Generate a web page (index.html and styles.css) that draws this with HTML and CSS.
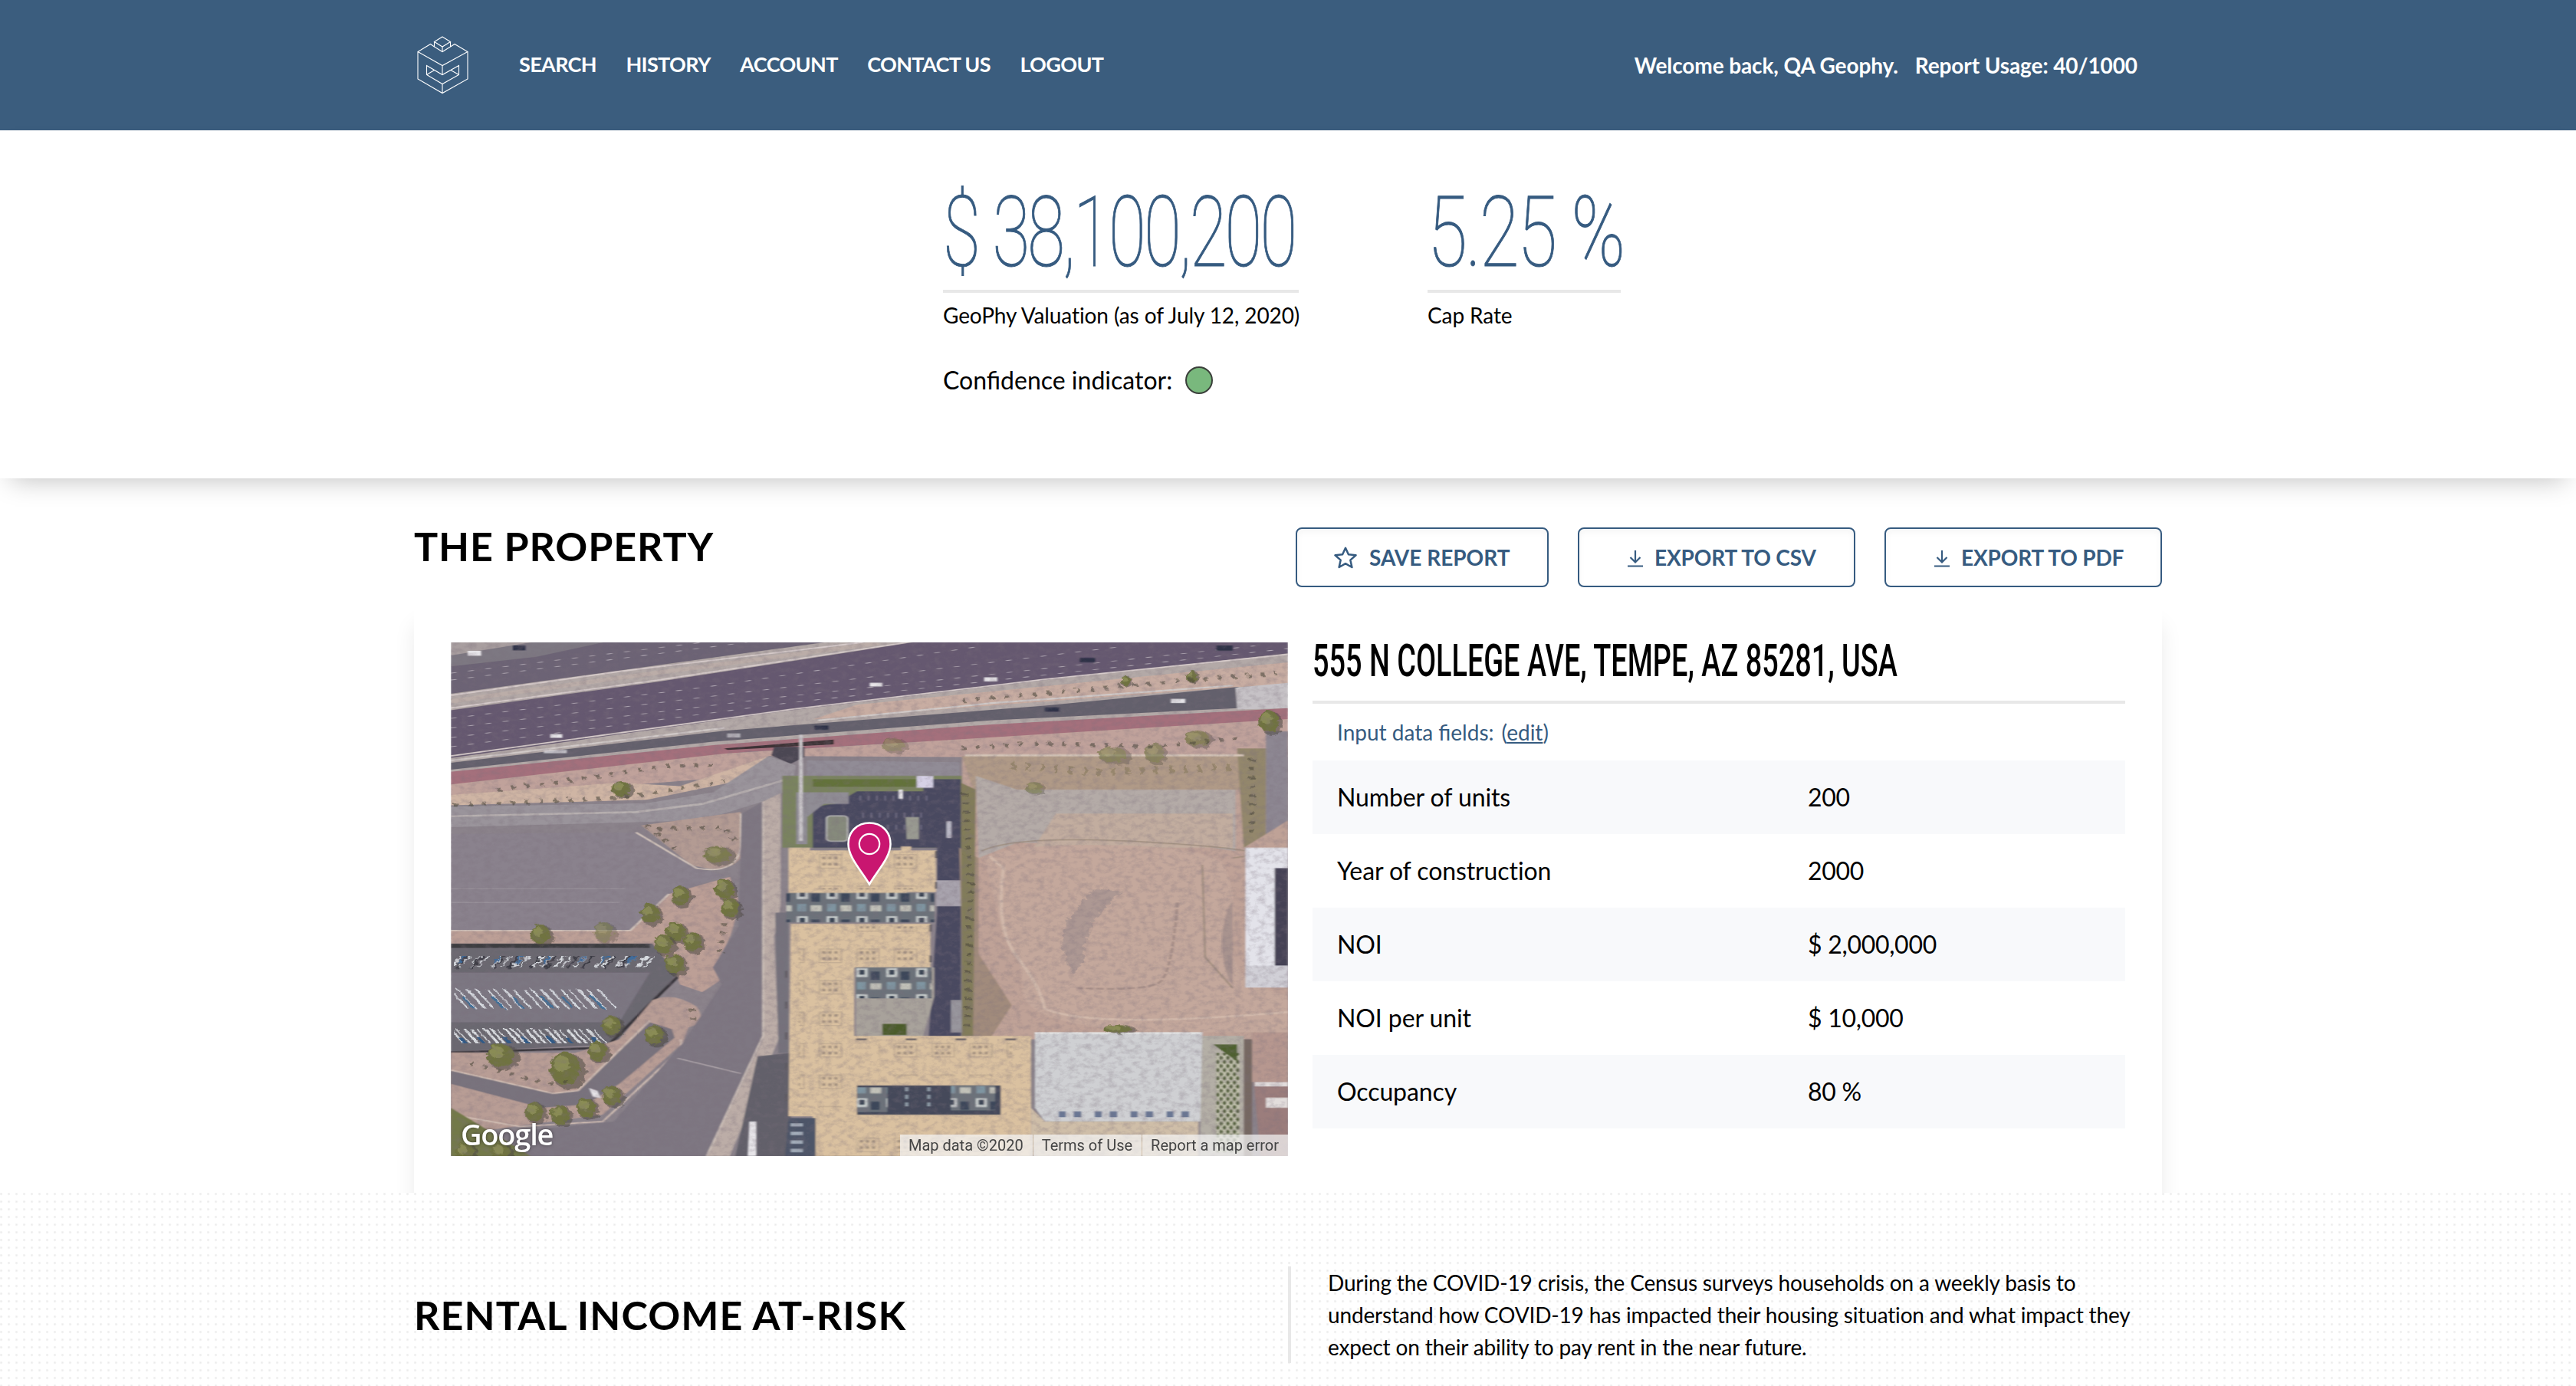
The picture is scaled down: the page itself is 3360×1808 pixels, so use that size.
FILE: index.html
```html
<!DOCTYPE html>
<html lang="en">
<head>
<meta charset="utf-8">
<title>GeoPhy Valuation</title>
<link rel="stylesheet" href="styles.css">
</head>
<body>
<header class="topbar">
  <div class="container topbar-inner">
    <svg class="logo" viewBox="0 0 67 76" fill="none" stroke="#fff" stroke-width="1.1">
      <path d="M33 1 43.500 7.500 33 14 22.500 7.500zM22.500 7.500V14L33 20.500 43.500 14V7.500M33 14V20.500"/>
      <path d="M22.500 14 17.500 10.500 1 20.500 33 38.500 66 20.500 49 10.500 43.500 14M1 20.500V56L33 74.500 66 56V20.500M33 38.500V50.500M33 62.500V74.500"/>
      <path d="M12.500 38.500V50.500L33 62.500 54.500 50.500V38.500L33 50.500zM12.500 50.500 22.500 44.500M54.500 50.500 44 44.500"/>
    </svg>
    <nav class="nav">
      <a>SEARCH</a><a>HISTORY</a><a>ACCOUNT</a><a>CONTACT US</a><a>LOGOUT</a>
    </nav>
    <div class="usage"><span>Welcome back, QA Geophy.</span><span>Report Usage: 40/1000</span></div>
  </div>
</header>

<section class="hero">
  <div class="metric metric-value">
    <div class="figure"><span>$ 38,100,200</span></div>
    <div class="label">GeoPhy Valuation (as of July 12, 2020)</div>
    <div class="confidence">Confidence indicator: <i class="dot"></i></div>
  </div>
  <div class="metric metric-rate">
    <div class="figure"><span>5.25 %</span></div>
    <div class="label">Cap Rate</div>
  </div>
</section>

<main class="property">
  <div class="container">
    <div class="section-head">
      <h2>THE PROPERTY</h2>
      <div class="actions">
        <button class="btn">
          <svg class="star" viewBox="0 0 30 29" fill="none" stroke="currentColor" stroke-width="2.500" stroke-linejoin="round"><path d="M15 1.800 18.900 10.300 28.500 11.300 21.300 17.600 23.400 27 15 22.200 6.600 27 8.700 17.600 1.500 11.300 11.100 10.300z"/></svg>
          SAVE REPORT
        </button>
        <button class="btn btn-export">
          <svg class="down" viewBox="0 0 20 22" fill="none" stroke="currentColor" stroke-width="2.200"><path d="M10 0V15M3.500 9 10 15.500 16.500 9M0 20.500H20"/></svg>
          EXPORT TO CSV
        </button>
        <button class="btn btn-export">
          <svg class="down" viewBox="0 0 20 22" fill="none" stroke="currentColor" stroke-width="2.200"><path d="M10 0V15M3.500 9 10 15.500 16.500 9M0 20.500H20"/></svg>
          EXPORT TO PDF
        </button>
      </div>
    </div>

    <div class="card">
      <div class="map">
        <svg class="aerial" viewBox="25 40 1515 1501" preserveAspectRatio="none">
          <defs>
            <filter id="grain" x="0" y="0" width="100%" height="100%">
              <feTurbulence type="fractalNoise" baseFrequency="0.070" numOctaves="4" seed="4"/>
              <feColorMatrix values="0 0 0 0 .2  0 0 0 0 .16  0 0 0 0 .2  1.500 0 0 0 -.620"/>
            </filter>
            <filter id="soft"><feGaussianBlur stdDeviation="1.200"/></filter>
            <filter id="rough" x="0" y="0" width="100%" height="100%">
              <feTurbulence type="fractalNoise" baseFrequency="0.090" numOctaves="2" seed="9"/>
              <feDisplacementMap in="SourceGraphic" scale="14"/>
              <feGaussianBlur stdDeviation="1.100"/>
            </filter>
            <pattern id="units" width="68" height="92" patternUnits="userSpaceOnUse">
              <rect x="12" y="16" width="40" height="40" fill="none" stroke="#ad9a88" stroke-width="1.500"/>
              <path d="M17 26H48M17 44H48" stroke="#a3917f" stroke-width="7" stroke-dasharray="6 5"/>
            </pattern>
            <pattern id="balcony" width="54" height="76" patternUnits="userSpaceOnUse">
              <rect width="54" height="76" fill="#6c727a"/>
              <rect x="3" y="4" width="20" height="26" fill="#cbd0cf"/><rect x="8" y="9" width="10" height="14" fill="#3a4554"/>
              <rect x="29" y="14" width="16" height="24" fill="#3c475a"/><rect x="4" y="44" width="16" height="22" fill="#7f95a1"/>
              <rect x="28" y="48" width="20" height="18" fill="#c2c2b9"/>
            </pattern>
            <pattern id="lattice" width="12" height="24" patternUnits="userSpaceOnUse">
              <rect width="12" height="24" fill="#c4c3b0"/><path d="M3 0 6 6 3 12 0 6zM9 12 12 18 9 24 6 18z" fill="#4d5a34" stroke="#4d5a34" stroke-width="1.500"/>
            </pattern>
            <g id="tree"><ellipse cx="5" cy="6" rx="19" ry="31" fill="#4a4740" opacity=".55"/><ellipse rx="17" ry="28" fill="#6f7340"/><ellipse cx="-4" cy="-8" rx="9" ry="14" fill="#8a8c55"/></g>
          </defs>
          <g filter="url(#soft)">
          <rect x="25" y="40" width="1515" height="1501" fill="#8b838b"/>
          <!-- freeway -->
          <path d="M25 40H1540V240L720 320 25 420z" fill="#b3a9a7"/>
          <path d="M25 90 300 40H700L25 190z" fill="#6c6474"/>
          <path d="M25 110 180 82 300 40H25z" fill="#7d7882"/>
          <path d="M25 40H170L25 78z" fill="#a89e9f"/>
          <path d="M25 238 400 155 860 40H1540V72L1100 150 640 238 25 378z" fill="#65596f"/>
          <g fill="none" stroke="#b5acb8" stroke-width="2" stroke-dasharray="10 22">
            <path d="M25 262 480 172 980 52M25 290 560 185 1240 52M25 318 620 200 1480 50M25 345 640 216 1540 58M25 150 560 40M25 130 480 40"/>
          </g>
          <path d="M25 195 330 125 770 40M25 232 400 150 850 40M25 372 640 236 1100 148 1540 75" fill="none" stroke="#d6cbca" stroke-width="4"/>
          <path d="M25 212 360 137 800 42" fill="none" stroke="#bbada8" stroke-width="12"/>
          <path d="M680 265 760 222 1000 184 1540 98V160L1000 225z" fill="#c8ada2"/>
          <path d="M25 392 520 298 1100 225 1450 170V232L1000 268 500 330 25 412z" fill="#63606c"/>
          <path d="M1445 172 1540 158V232L1448 236z" fill="#c6c2c6"/>
          <path d="M690 268 1000 218 1440 166M25 385 520 290" stroke="#d0c9c7" stroke-width="5" fill="none"/>
          <path d="M25 418 500 340 1000 280 1540 232V268L1000 320 560 360 25 462z" fill="#a4707c"/>
          <path d="M25 455 520 365 720 345 1000 318 1540 264V375H950L600 372 480 440 25 500z" fill="#c0a29b"/>
          <path d="M25 486 330 450 440 460 600 372 560 440 380 500 25 516z" fill="#cfb5a4"/>
          <path d="M520 350 718 324V338L525 354z" fill="#3c3036"/><path d="M610 345H665V375L640 395 605 370z" fill="#4c4753"/>
          <!-- ramp road -->
          <path d="M25 520 380 510 500 478 600 372 650 400 640 470 590 505 480 560 25 580z" fill="#9a949b"/>
          <path d="M25 548 360 536 480 512 570 470 650 432" stroke="#b7b0b0" stroke-width="6" fill="none"/>
          <path d="M670 385 945 390V445H668z" fill="#918c96"/>
          <path d="M370 575 550 535 550 670Q525 720 460 690z" fill="#b39b93"/>
          <!-- west lots -->
          <path d="M25 600 360 595 470 700 520 720 420 780 350 880 25 882z" fill="#8a828d"/>
          <path d="M25 760H340M25 800H330" stroke="#979099" stroke-width="3"/>
          <path d="M25 882H350L420 775 530 725 545 790Q540 900 500 990L515 1025 480 1062 440 1040 430 1000 25 925z" fill="#bc9f96"/>
          <path d="M25 882H350L420 775M360 595 470 700Q540 720 550 640V540" stroke="#cec0b8" stroke-width="4" fill="none"/>
          <path d="M25 920H390L435 1010 320 1215 25 1235z" fill="#6b6770"/>
          <path d="M25 1005H385L330 1150H25z" fill="#7c7782"/>
          <path d="M25 927H385" stroke="#3d3c40" stroke-width="12"/>
          </g>
          <g filter="url(#rough)">
          <g transform="translate(0 962) skewX(-30)"><path d="M38 0H392" stroke="#d9dde2" stroke-width="54" stroke-dasharray="5 11 3 17 6 8 4 21"/><path d="M45 -5H388" stroke="#3c6a9b" stroke-width="40" stroke-dasharray="6 59 4 35 5 44"/><path d="M50 10H380" stroke="#3b3b44" stroke-width="40" stroke-dasharray="4 22 6 35"/></g>
          <g transform="translate(0 1082) skewX(30)"><path d="M38 0H315" stroke="#d5d9df" stroke-width="56" stroke-dasharray="4 10 3 13 6 11 4 16"/><path d="M48 10H310" stroke="#426f97" stroke-width="34" stroke-dasharray="5 48 6 31"/></g>
          <g transform="translate(0 1198) skewX(30)"><path d="M38 0H300" stroke="#dadde1" stroke-width="58" stroke-dasharray="5 7 3 10 6 6"/><path d="M40 12H296" stroke="#315a86" stroke-width="34" stroke-dasharray="8 26 6 40"/></g>
          </g>
          <g filter="url(#soft)">
          <path d="M435 1018 305 1225 25 1238" fill="none" stroke="#37343a" stroke-width="6"/>
          <path d="M25 1238 250 1240 330 1200 390 1085Q430 1060 470 1105 490 1150 455 1165L445 1210 300 1420 25 1480z" fill="#b89d95"/>
          <path d="M25 1290 210 1358 255 1350 385 1150 425 1170 430 1195 330 1330 270 1390 190 1400 25 1330z" fill="#79737d"/>
          <path d="M440 1200Q450 1220 420 1260L300 1440 150 1455 25 1420M25 1290 210 1358 255 1350 385 1145" fill="none" stroke="#d0bdb3" stroke-width="4"/>
          <path d="M25 1400 170 1541H25z" fill="#73794a"/>
          <!-- college avenue -->
          <path d="M552 540 590 505 600 1200 490 1541H170L110 1475 320 1440 445 1210 515 1040 500 990 545 870z" fill="#7e7782"/>
          <path d="M590 505 622 480V810L610 900 618 1200 530 1541H488L590 1200z" fill="#bcada7"/>
          <path d="M590 505V1190L488 1541M618 830V1200" fill="none" stroke="#d2c5bd" stroke-width="3"/>
          <path d="M435 1255 550 1300" stroke="#b2a9ad" stroke-width="3"/>
          <path d="M580 1250 640 1240V1541H540z" fill="#62616a"/>
          <path d="M612 830H636V1240H618z" fill="#75727b"/>
          <!-- parking court -->
          <path d="M625 430H950V640H625z" fill="#7a835f"/>
          <path d="M680 640V540Q682 515 720 512L760 475H880V440H948V1200L890 1190 905 830V640z" fill="#4a4860"/>
          <path d="M665 478H745V512H700L670 550V630H650V478z" fill="#908d95"/><rect x="655" y="310" width="7" height="310" fill="#cbc7ca"/>
          <path d="M680 440H870V462H680z" fill="#63723a"/><path d="M868 430H898V465H868z" fill="#d6d1e6"/>
          <rect x="705" y="547" width="38" height="74" rx="8" fill="#868a7c" stroke="#b9b9b8" stroke-width="3"/>
          <path d="M765 495H890M770 545H880M800 580H880" stroke="#7b788e" stroke-width="15" stroke-dasharray="2 13"/>
          <path d="M848 550H872V615H850z" fill="#999a91"/><rect x="922" y="562" width="9" height="50" rx="3" fill="#bab9c6"/>
          <rect x="903" y="735" width="46" height="76" fill="#a8a3ad"/><rect x="930" y="1085" width="20" height="95" fill="#98969d"/>
          <!-- east side -->
          <path d="M950 372H1540V1200H1050L955 1190z" fill="#bfa297"/>
          <path d="M950 372H1500V470H970z" fill="#b09a87"/>
          <path d="M975 430 1050 470H1445V650L1380 635 1050 625 980 670z" fill="#b4aba7"/>
          <path d="M1120 540 1440 540V640H1080z" fill="#c2ad9f"/>
          <path d="M945 640 980 670V950L1040 1100 1000 1200H955z" fill="#a18b7b"/>
          <path d="M990 670Q1030 630 1200 632T1420 680Q1450 760 1440 900T1540 1070V1180H1300Q1060 1160 1060 1060T1025 900z" fill="#c4a89c"/>
          <path d="M1000 665 1025 700Q1010 880 1050 960T1100 1110Q1180 1170 1540 1120" fill="none" stroke="#d2b9ab" stroke-width="6"/>
          <path d="M985 650Q1050 600 1300 625T1440 670M1385 690 1390 960 1440 1050" fill="none" stroke="#9c8b7b" stroke-width="3"/>
          <path d="M1340 800Q1330 1000 1310 1030T1160 1050" fill="none" stroke="#a78f88" stroke-width="5" stroke-dasharray="14 5"/>
          <path d="M1420 900Q1430 800 1440 800V1040Q1420 1000 1420 900z" fill="#a8938e"/>
          <path d="M948 450 975 470 970 1190H950z" fill="#827c5a"/><path d="M1448 350H1500V600L1460 640z" fill="#93876c"/>
          <path d="M1500 300H1540V560L1500 600z" fill="#8d8792"/>
          <path d="M955 370H1460" stroke="#d3c3b6" stroke-width="7"/>
          <path d="M1463 640H1540V1048H1463z" fill="#e3e3ea"/><path d="M1516 700H1540V985H1516z" fill="#454354"/><path d="M1463 985H1540V1048H1463z" fill="#d1d0d7"/>
          <!-- apartment roofs -->
          <path d="M636 640H675V648H840V636H858V648H903V770H850V778H636z" fill="#dac1a0"/>
          <rect x="675" y="652" width="200" height="110" fill="url(#units)"/>
          <path d="M632 772H900V858H632z" fill="url(#balcony)"/>
          <path d="M640 862H893V990H755V1190H1075V1541H680V1425H636z" fill="#dac1a0"/>
          <path d="M655 890H745V1400H655zM745 870H880V975H745zM800 1205H1040V1310H800zM760 1440H1060V1541H760z" fill="url(#units)"/>
          <path d="M758 990H900V1075L880 1190H758z" fill="#a8a29b"/><path d="M758 990H895V1080H758z" fill="url(#balcony)"/>
          <rect x="806" y="1155" width="44" height="32" fill="#4c5c2c"/>
          <path d="M760 1335H1020V1420H760z" fill="#444a5a"/><path d="M760 1340H815V1412H760zM930 1335H1010V1408H930z" fill="url(#balcony)"/>
          <path d="M850 1340V1405M890 1340V1405" stroke="#8b97a3" stroke-width="6" stroke-dasharray="12 10"/>
          <path d="M636 1430H685V1541H630z" fill="#4d5567"/><path d="M640 1450H662M640 1475H662M640 1500H662M640 1525H662" stroke="#a3adba" stroke-width="10"/>
          <path d="M632 1000V1420M758 1200H1070M903 650V765M893 865V985" stroke="#5f5a61" stroke-width="4" stroke-dasharray="20 70"/>
          <!-- warehouse -->
          <path d="M1082 1180H1385V1440H1100L1082 1400z" fill="#cfd0d3"/>
          <path d="M1082 1182H1385" stroke="#e6e6e6" stroke-width="5"/>
          <path d="M1125 1419H1370" stroke="#6b7794" stroke-width="17" stroke-dasharray="13 14 14 24"/>
          <path d="M1075 1400 1100 1440H1378V1541H1075z" fill="#cfbea8"/><path d="M1105 1450H1370V1500H1105z" fill="url(#units)"/>
          <path d="M1385 1190H1460V1541H1380z" fill="#b4afa6"/><rect x="1410" y="1240" width="42" height="290" fill="url(#lattice)"/><path d="M1405 1215H1448V1265z" fill="#4e612e"/>
          <path d="M1460 1200H1475V1541H1460z" fill="#766762"/><path d="M1475 1180H1540V1325H1475z" fill="#b6978f"/>
          <path d="M1478 1325H1540V1541H1490z" fill="#9b7d7b"/><path d="M1480 1325H1540V1338H1480zM1500 1370H1540V1400H1500z" fill="#e2dddc"/>
          </g>
          <!-- vegetation -->
          <g filter="url(#rough)">
            <path d="M1240 768Q1170 850 1170 970L1150 1010 1130 930 1140 850 1190 760z" fill="#ad9893"/>
            <use href="#tree" x="187" y="893"/><use href="#tree" x="302" y="886" opacity=".6"/><use href="#tree" x="440" y="780"/><use href="#tree" x="520" y="760"/><use href="#tree" x="530" y="815"/>
            <use href="#tree" x="385" y="832"/><use href="#tree" x="432" y="885"/><use href="#tree" x="462" y="915"/><use href="#tree" x="410" y="922"/><use href="#tree" x="430" y="980"/>
            <use href="#tree" x="316" y="1160"/><use href="#tree" x="393" y="1187"/><use href="#tree" transform="translate(114 1246) scale(1.500 1.200)"/><use href="#tree" transform="translate(232 1285) scale(1.600 1.700)"/><use href="#tree" x="290" y="1235"/>
            <use href="#tree" x="316" y="1365" /><use href="#tree" x="270" y="1400"/><use href="#tree" x="222" y="1420"/><use href="#tree" x="176" y="1412"/><use href="#tree" transform="translate(333 468) scale(1 .8)"/><use href="#tree" transform="translate(507 660) scale(1.400 .9)" opacity=".8"/>
            <use href="#tree" transform="translate(1505 270) scale(1.100)"/><use href="#tree" transform="translate(1375 320) scale(1.300 .8)" opacity=".7"/><use href="#tree" transform="translate(1222 368) scale(1.500 .8)" opacity=".6"/><use href="#tree" x="1298" y="362" opacity=".6"/>
            <use href="#tree" transform="translate(1365 138) scale(.6)"/><use href="#tree" transform="translate(1246 152) scale(.5)"/><use href="#tree" transform="translate(1080 465) scale(.9 .6)" opacity=".6"/><use href="#tree" transform="translate(825 340) scale(1.200 .7)" opacity=".5"/>
            <use href="#tree" transform="translate(1230 1170) scale(1.500 .4)"/><use href="#tree" x="50" y="1530"/><use href="#tree" x="115" y="1530"/>
            <g fill="none" stroke="#4d4a3c" stroke-width="11" stroke-dasharray="7 19" opacity=".6">
              <path d="M950 210 1110 188 1290 160 1520 130"/><path d="M110 472 250 440 420 400 500 400"/><path d="M30 515 330 495 520 445"/><path d="M380 575 440 655M400 585 520 580 540 620"/><path d="M950 350 1080 335 1300 345 1450 320"/><path d="M955 480 965 740 960 1170"/><path d="M1040 400 1200 420 1440 405" stroke="#877b5b" stroke-width="22"/><path d="M1475 380V600M520 860 510 960M460 1110 465 1150M60 1270 200 1330 250 1320"/>
            </g>
          </g>
          <g filter="url(#soft)">
            <g fill="#e6e4e8"><rect x="55" y="65" width="25" height="14"/><rect x="783" y="158" width="23" height="11"/><rect x="990" y="142" width="24" height="12"/><rect x="1328" y="205" width="26" height="12"/><rect x="205" y="308" width="22" height="11"/><rect x="193" y="354" width="42" height="10" opacity=".7"/><rect x="525" y="306" width="24" height="12" opacity=".6"/><rect x="835" y="470" width="9" height="27"/><path d="M275 1342 290 1350 297 1372 282 1368zM565 1440H578V1541H562z"/></g>
            <g fill="#2d3046"><rect x="1163" y="85" width="28" height="13"/><rect x="1410" y="50" width="30" height="14"/><rect x="138" y="50" width="22" height="13"/><rect x="1100" y="230" width="26" height="12"/><rect x="683" y="283" width="25" height="12"/></g>
          </g>
          <rect x="25" y="40" width="1515" height="1501" filter="url(#grain)" opacity=".45"/>
        </svg>
        <svg class="pin" viewBox="0 0 60 86"><path d="M30 2.500C14 2.500 2.500 14 2.500 30 2.500 47 19 64 30 82.500 41 64 57.500 47 57.500 30 57.500 14 46 2.500 30 2.500z" fill="#c91670" stroke="#fff" stroke-width="2.500"/><circle cx="30" cy="30" r="13.200" fill="none" stroke="#fff" stroke-width="2.200"/></svg>
        <div class="google">Google</div>
        <div class="attribution"><span>Map data ©2020</span><span>Terms of Use</span><span>Report a map error</span></div>
      </div>

      <div class="details">
        <div class="address"><span>555 N COLLEGE AVE, TEMPE, AZ 85281, USA</span></div>
        <div class="input-note">Input data fields:<span class="edit">(<a>edit</a>)</span></div>
        <dl class="fields">
          <div><dt>Number of units</dt><dd>200</dd></div>
          <div><dt>Year of construction</dt><dd>2000</dd></div>
          <div><dt>NOI</dt><dd>$ 2,000,000</dd></div>
          <div><dt>NOI per unit</dt><dd>$ 10,000</dd></div>
          <div><dt>Occupancy</dt><dd>80 %</dd></div>
        </dl>
      </div>
    </div>
  </div>
</main>

<section class="risk">
  <div class="container risk-inner">
    <h2>RENTAL INCOME AT-RISK</h2>
    <p>During the COVID-19 crisis, the Census surveys households on a weekly basis to<br>understand how COVID-19 has impacted their housing situation and what impact they<br>expect on their ability to pay rent in the near future.</p>
  </div>
</section>
</body>
</html>
```
FILE: styles.css
```css
* { box-sizing: border-box; }
html, body { height: 1808px; overflow: hidden; }
body { margin: 0; background: #fff; color: #000; font: 400 28px/34px Lato, "Liberation Sans", sans-serif; }
h2, p, dl, dd { margin: 0; }
h2 { font-size: 52px; line-height: 62px; font-weight: 700; letter-spacing: 1.1px; white-space: nowrap; }
.container { width: 2280px; margin: 0 auto; }

.topbar { height: 170px; background: #3b5d7e; color: #fff; font-weight: 700; }
.topbar-inner { display: flex; align-items: center; height: 170px; padding: 0 32px 0 4px; }
.logo { width: 67px; height: 76px; }
.nav { display: flex; gap: 38.500px; margin-left: 66px; padding-bottom: 3px; font-size: 27px; letter-spacing: -.65px; white-space: nowrap; }
.usage { display: flex; gap: 22px; margin-left: auto; letter-spacing: -.1px; white-space: nowrap; }

.hero { position: relative; display: flex; height: 454px; padding: 58px 0 0 1230px; background: #fff; box-shadow: 0 16px 32px -14px rgba(0, 0, 0, .25); }
.metric { white-space: nowrap; }
.metric-value { width: 464px; margin-right: 168px; }
.metric-rate { width: 252px; }
.figure { height: 154px; border-bottom: 4px solid #e8e8e8; font: 100 128px/150px Roboto, sans-serif; color: #365b80; -webkit-text-stroke: 1px #365b80; }
.figure span { display: inline-block; transform: scaleX(.695); transform-origin: left center; letter-spacing: -4px; }
.metric-rate .figure span { transform: scaleX(.74); letter-spacing: -3px; }
.label { margin-top: 12px; letter-spacing: -.1px; }
.confidence { display: flex; align-items: center; height: 40px; margin-top: 48px; font-size: 32px; }
.dot { width: 36px; height: 36px; margin-left: 17px; border: 2px solid #3a3f3a; border-radius: 50%; background: #79b87d; }

.property { height: 932px; overflow: hidden; padding-top: 64px; }
.section-head { display: flex; justify-content: space-between; height: 78px; }
.section-head h2 { margin-top: -7px; letter-spacing: .9px; }
.actions { display: flex; gap: 38px; }
.btn { display: flex; align-items: center; gap: 16px; height: 78px; width: 330px; padding: 0 0 0 48px; border: 2px solid #365b80; border-radius: 8px; background: #fff; box-shadow: inset 0 4px 8px rgba(0, 0, 0, .04); color: #365b80; font: 700 28px/34px Lato, sans-serif; white-space: nowrap; }
.btn-export { width: 362px; padding-left: 63px; gap: 15px; letter-spacing: -.15px; }
.star { width: 30px; height: 29px; }
.down { width: 20px; height: 22px; margin-top: 4px; }

.card { display: flex; gap: 32px; height: 900px; margin-top: 24px; padding: 48px; border-radius: 8px; background: #fff; box-shadow: 0 24px 28px rgba(0, 0, 0, .08); }
.map { position: relative; flex: none; width: 1092px; height: 670px; overflow: hidden; }
.aerial { display: block; width: 1092px; height: 670px; }
.pin { position: absolute; left: 516px; top: 233px; width: 60px; height: 86px; }
.google { position: absolute; left: 13px; top: 618px; font: 600 38px/46px "Open Sans", sans-serif; letter-spacing: -1.2px; color: #fff; text-shadow: 0 0 4px rgba(0, 0, 0, .5); }
.attribution { position: absolute; right: 0; bottom: 0; display: flex; height: 28px; font: 400 20px/28px Roboto, sans-serif; color: #444; white-space: nowrap; }
.attribution span { padding: 0 12px 0 11px; background: rgba(245, 245, 245, .72); }
.attribution span + span { margin-left: 1px; }

.details { width: 1060px; }
.address { height: 80px; border-bottom: 4px solid #e8e8e8; font: 500 60px/48px Roboto, sans-serif; white-space: nowrap; }
.address span { display: inline-block; transform: scaleX(.631); transform-origin: left center; }
.input-note { display: flex; align-items: center; gap: 10px; height: 74px; padding-left: 32px; color: #365b80; }
.edit a { text-decoration: underline; }
.fields { font-size: 32px; }
.fields div { display: flex; align-items: center; height: 96px; padding-left: 32px; }
.fields div:nth-child(odd) { background: #f8f9fb; }
.fields dt { width: 614px; letter-spacing: -.1px; }
.fields dd { letter-spacing: -.3px; }

.risk { height: 252px; padding-top: 96px; background: radial-gradient(circle at 1.500px 1.500px, #ebebeb 0, #f4f4f4 1.300px, transparent 2.200px) 0 0 / 10px 10px #fff; }
.risk-inner { display: flex; align-items: center; }
.risk h2 { width: 1140px; }
.risk p { flex: 1; border-left: 4px solid #e8e8e8; padding-left: 48px; line-height: 42px; letter-spacing: -.16px; white-space: nowrap; }
```
